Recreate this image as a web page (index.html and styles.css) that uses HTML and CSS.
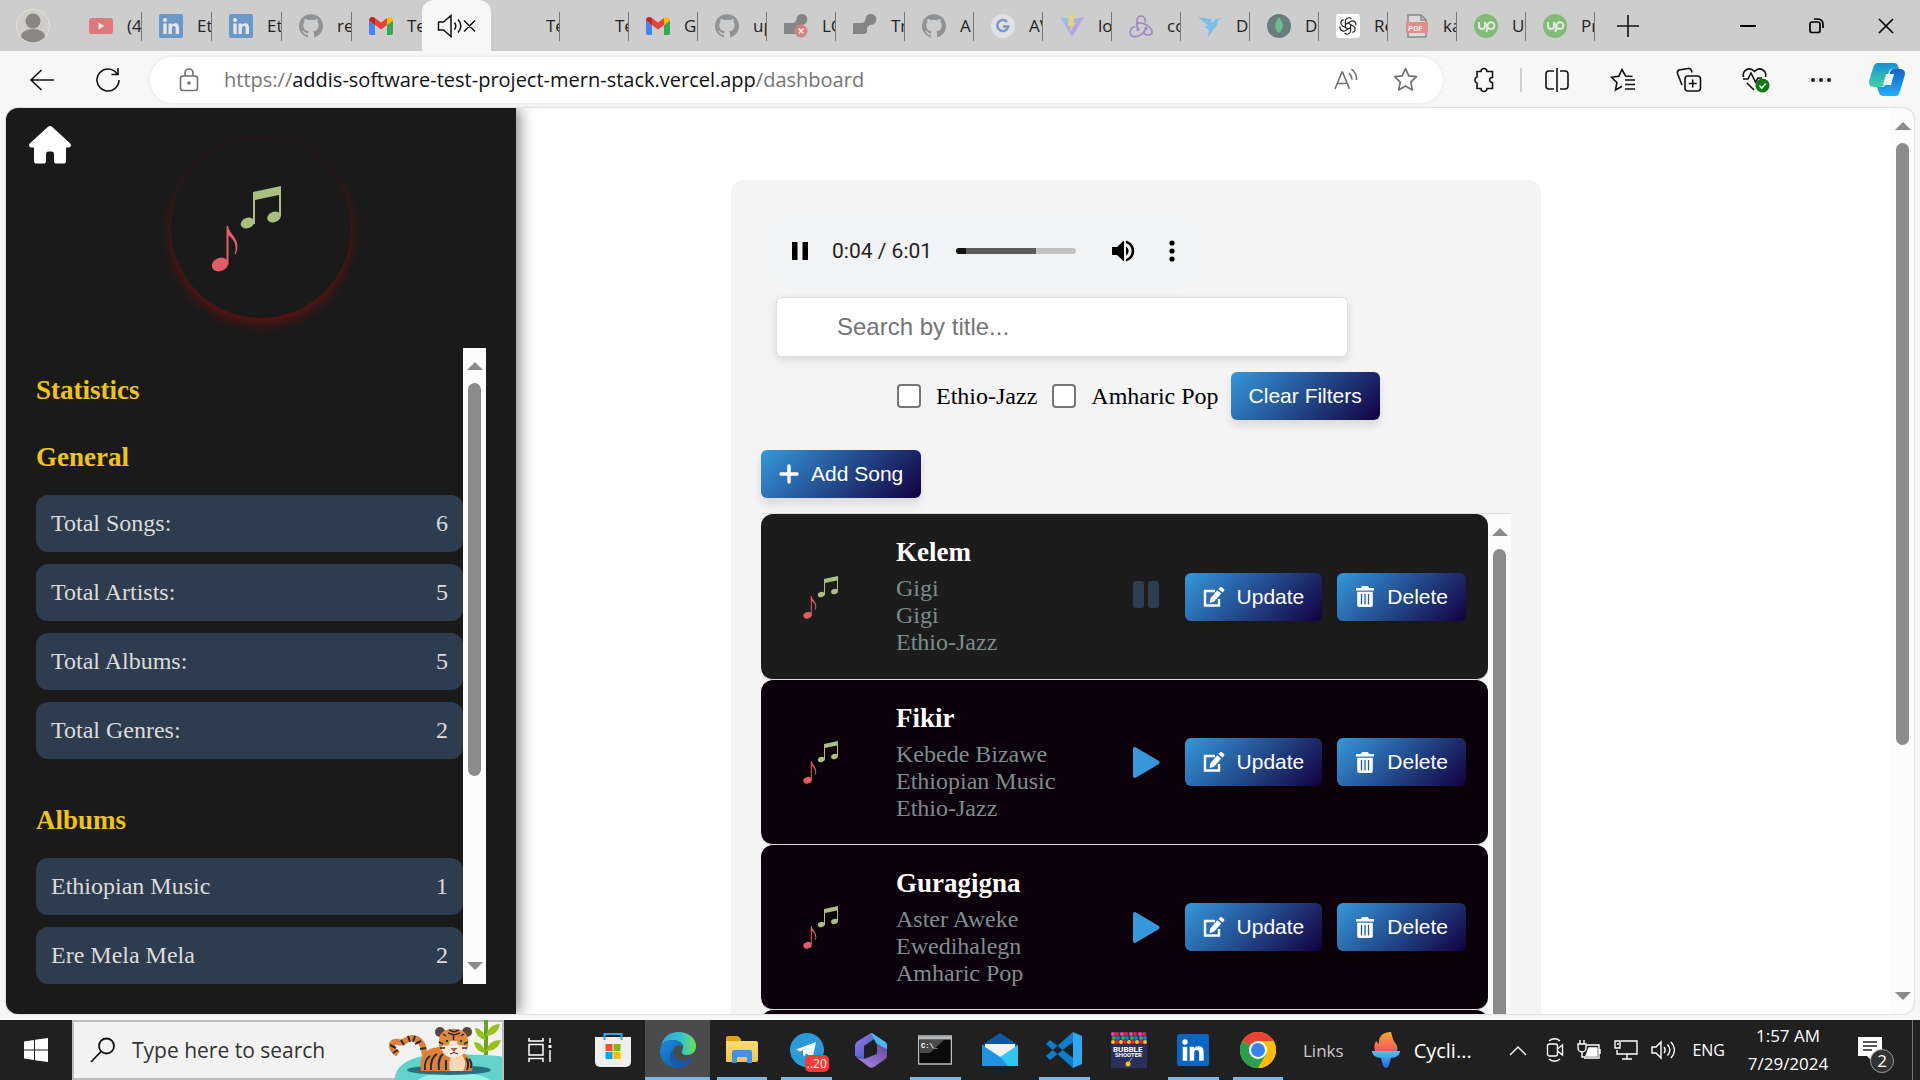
FILE: index.html
```html
<!DOCTYPE html>
<html lang="en">
<head>
<meta charset="utf-8">
<title>Dashboard</title>
<link rel="stylesheet" href="styles.css">
</head>
<body>
<svg class="defs" aria-hidden="true">
  <defs>
    <linearGradient id="g-edge" x1="0" y1="0" x2="1" y2="0"><stop offset="0" stop-color="#2aa5e0"/><stop offset=".6" stop-color="#35c6c9"/><stop offset="1" stop-color="#6be04f"/></linearGradient>
    <linearGradient id="g-edge2" x1="0" y1="0" x2="1" y2="1"><stop offset="0" stop-color="#1a8fe0"/><stop offset="1" stop-color="#0f4fa3"/></linearGradient>
    <linearGradient id="g-cop" x1="0" y1="0" x2="0" y2="1"><stop offset="0" stop-color="#1690d8"/><stop offset="1" stop-color="#3fd3a0"/></linearGradient>
    <linearGradient id="g-cop2" x1="0" y1="0" x2="0" y2="1"><stop offset="0" stop-color="#1560c8"/><stop offset="1" stop-color="#22b0f5"/></linearGradient>
    <linearGradient id="g-flame" x1="0" y1="0" x2="0" y2="1"><stop offset="0" stop-color="#f7a823"/><stop offset="1" stop-color="#f4556a"/></linearGradient>
    <linearGradient id="g-torch" x1="0" y1="0" x2="0" y2="1"><stop offset="0" stop-color="#55c3f7"/><stop offset="1" stop-color="#1c64e0"/></linearGradient>
    <linearGradient id="g-365" x1="0" y1="0" x2="1" y2="1"><stop offset="0" stop-color="#a07bea"/><stop offset="1" stop-color="#2b57c9"/></linearGradient>
    <linearGradient id="g-365b" x1="0" y1="1" x2="1" y2="0"><stop offset="0" stop-color="#b58bf0"/><stop offset="1" stop-color="#5c4796"/></linearGradient>
    <linearGradient id="g-folder" x1="0" y1="0" x2="0" y2="1"><stop offset="0" stop-color="#ffdc73"/><stop offset="1" stop-color="#f7c443"/></linearGradient>
    <linearGradient id="g-vite" x1="0" y1="0" x2="1" y2="1"><stop offset="0" stop-color="#67c5f5"/><stop offset="1" stop-color="#bd50f5"/></linearGradient>
    <symbol id="github" viewBox="0 0 16 16"><path fill="#555a5e" d="M8 0a8 8 0 0 0-2.5 15.6c.4.1.5-.2.5-.4v-1.400c-2.200.5-2.700-1-2.700-1-.4-.9-.9-1.200-.9-1.200-.7-.5.1-.5.1-.5.8.1 1.200.8 1.200.8.7 1.200 1.900.9 2.300.7.1-.5.3-.9.5-1.100-1.800-.2-3.600-.9-3.600-4 0-.9.3-1.600.8-2.100-.1-.2-.4-1 .1-2.100 0 0 .7-.2 2.200.8a7.500 7.500 0 0 1 4 0c1.500-1 2.200-.8 2.200-.8.4 1.100.2 1.900.1 2.100.5.6.8 1.300.8 2.200 0 3.100-1.900 3.700-3.700 3.900.3.300.6.8.6 1.500v2.200c0 .2.1.5.5.4A8 8 0 0 0 8 0z"/></symbol>
    <symbol id="linkedin" viewBox="0 0 24 24"><rect width="24" height="24" rx="2" fill="#0a66c2"/><g fill="#fff"><circle cx="6" cy="6" r="2"/><path d="M4.300 9.500h3.400V20H4.300zM9.500 9.500h3.300v1.500c.6-1 1.700-1.800 3.300-1.800 3.200 0 3.900 2 3.900 4.900V20h-3.400v-5.300c0-1.400-.2-2.700-1.700-2.700-1.600 0-2 1.300-2 2.700V20H9.500z"/></g></symbol>
    <symbol id="gmail" viewBox="0 0 24 18"><path fill="#4285f4" d="M0 3v13a2 2 0 0 0 2 2h4V8z"/><path fill="#34a853" d="M24 3v13a2 2 0 0 1-2 2h-4V8z"/><path fill="#ea4335" d="M6 1l6 4.500L18 1v7l-6 4.500L6 8z"/><path fill="#fbbc04" d="M18 1c3-2 6-1 6 2.500L18 8z"/><path fill="#c5221f" d="M6 1C3-1 0 0 0 3.500L6 8z"/></symbol>
    <symbol id="joint" viewBox="0 0 24 24"><path fill="#404040" d="M18 0a5.500 5.500 0 0 1 3 10c-2.500 1.200-7 .8-7 5v2a3 3 0 0 1-3 3H0v-4a4 4 0 0 1 0-7h7c5 0 5-2 6-6a5.500 5.500 0 0 1 5-3z"/></symbol>
    <symbol id="upwork" viewBox="0 0 24 24"><circle cx="12" cy="12" r="12" fill="#37ad22"/><path d="M5 8v4a3 3 0 0 0 6 0V8c1 4 3 7 6 7a3.400 3.400 0 1 0-3.400-3.400L12.500 18" fill="none" stroke="#fff" stroke-width="2"/></symbol>
    <symbol id="star" viewBox="0 0 24 24"><path fill="none" stroke-linejoin="round" d="M12 1.500l3.200 7 7.300.8-5.400 5.200 1.400 7.500L12 18.300 5.500 22l1.400-7.500L1.500 9.300l7.300-.8z"/></symbol>
    <symbol id="notes" viewBox="0 0 180 180">
      <g fill="#acbe80"><path d="M82 54l28-6v30h-2V57l-24 5v24h-2z"/><ellipse cx="76.500" cy="85" rx="7" ry="5.200" transform="rotate(-22 76.500 85)"/><ellipse cx="103" cy="79" rx="7" ry="5.200" transform="rotate(-22 103 79)"/></g>
      <g fill="#e15d66"><path d="M55.500 88h1.500c1.500 8 10 12 9.500 21-.1 3-1 5-2 7.500l-1-.6c3.500-9-1.500-15.500-6-18.500v29h-2z"/><ellipse cx="49" cy="126.500" rx="8.500" ry="6.600" transform="rotate(-22 49 126.500)"/></g>
    </symbol>
    <symbol id="edit" viewBox="0 0 22 20"><path fill="none" stroke="#fff" stroke-width="2.400" d="M12 4H2v14.500h14V12"/><path fill="#fff" d="M14.300 3.200l4 3.400L11 14.800 6.500 16l.9-4.800zM15.500 2l1.600-1.700c.6-.5 1.400-.4 2 .1l1.800 1.600c.6.600.6 1.300.1 1.900l-1.500 1.600z"/></symbol>
    <symbol id="trash" viewBox="0 0 18 21"><path fill="#fff" d="M0 2h5l1-2h6l1 2h5v2.500H0zM1.200 5.700h15.600V19a2 2 0 0 1-2 2H3.200a2 2 0 0 1-2-2z"/><path stroke="#1f5c9c" stroke-width="1.300" d="M5.500 8v10.500M9 8v10.500M12.500 8v10.500"/></symbol>
    <symbol id="play" viewBox="0 0 27 31"><path fill="#3498db" d="M0 2C0 .3 1.500-.4 3 .5l22.500 13.200c1.500.9 1.500 2.700 0 3.600L3 30.500c-1.500.9-3 .2-3-1.500z"/></symbol>
  </defs>
</svg>

<header class="tabbar">
  <button class="profile" aria-label="Profile"><svg width="34" height="34" viewBox="0 0 34 34"><circle cx="17" cy="17" r="16.500" fill="#cfcdc8" stroke="#e4e2dd"/><circle cx="17" cy="12" r="7.500" fill="#8a8682"/><path d="M5 28a12 8 0 0 1 24 0 16 16 0 0 1-24 0z" fill="#8a8682"/></svg></button>
  <nav class="tabs">
    <button class="tab first"><svg class="dim" viewBox="0 0 24 24"><rect y="4" width="24" height="16" rx="3" fill="#f0282d"/><path d="M9.500 8.500l6 3.500-6 3.500z" fill="#fff"/></svg><span>(4</span></button>
    <button class="tab first"><svg class="dim"><use href="#linkedin"/></svg><span>Et</span></button>
    <button class="tab first"><svg class="dim"><use href="#linkedin"/></svg><span>Et</span></button>
    <button class="tab first"><svg class="dim"><use href="#github"/></svg><span>re</span></button>
    <button class="tab first last"><svg><use href="#gmail"/></svg><span>Te</span></button>
    <button class="tab active" aria-label="Mute tab"><svg class="sound" viewBox="0 0 40 24"><g fill="none" stroke="#111" stroke-width="1.500"><path d="M1.500 8h5L14 1.500v21L6.500 16h-5zM17.500 8.500c1.500 2 1.500 5 0 7M21 5.500c3.500 4 3.500 9 0 13M27 6.500l11 11M38 6.500l-11 11"/></g></svg></button>
    <button class="tab"><i class="blank"></i><span>Te</span></button>
    <button class="tab"><i class="blank"></i><span>Te</span></button>
    <button class="tab"><svg><use href="#gmail"/></svg><span>G</span></button>
    <button class="tab"><svg class="dim"><use href="#github"/></svg><span>up</span></button>
    <button class="tab"><svg class="dim" viewBox="0 0 24 24"><use href="#joint"/><circle cx="17" cy="17" r="6.500" fill="#d9343c"/><path d="M14.500 14.500l5 5m0-5l-5 5" stroke="#fff" stroke-width="1.500"/></svg><span>LO</span></button>
    <button class="tab"><svg class="dim"><use href="#joint"/></svg><span>Tr</span></button>
    <button class="tab"><svg class="dim"><use href="#github"/></svg><span>A</span></button>
    <button class="tab"><svg class="dim" viewBox="0 0 24 24"><circle cx="12" cy="12" r="12" fill="#f4f6fa"/><path d="M16 8a5.500 5.500 0 1 0 1.200 4.500H12" fill="none" stroke="#2c68c8" stroke-width="2.600"/></svg><span>AV</span></button>
    <button class="tab"><svg class="dim" viewBox="0 0 24 24"><path d="M0 3l12 2 12-2-12 20z" fill="url(#g-vite)"/><path d="M15 0L8.500 1.500 8 12l3-.5-1 6 6-9-3 .5z" fill="#ffd43b"/></svg><span>lo</span></button>
    <button class="tab"><svg class="dim" viewBox="0 0 24 24"><g fill="none" stroke="#764abc" stroke-width="1.700"><path d="M9 15C6 9 8 2 12 2c3.500 0 5 3.500 4 6.500"/><path d="M9 9c7-1 14 5 14 9 0 4-6 4-8 1"/><path d="M17 15c-3 6-10 9-14 7-4-3-1-9 3-9.500"/></g><circle cx="9" cy="15.500" r="1.700" fill="#764abc"/><circle cx="17" cy="14.500" r="1.700" fill="#764abc"/><circle cx="9" cy="9" r="1.500" fill="#764abc"/></svg><span>co</span></button>
    <button class="tab"><svg class="dim" viewBox="0 0 24 24"><path fill="#29b2fe" d="M0 3l13 2 1 4 4-4 6-1-4 2-1 5-9 12 1-7-5-4 5 .5z"/></svg><span>D</span></button>
    <button class="tab"><svg class="dim" viewBox="0 0 24 24"><circle cx="12" cy="12" r="12" fill="#023430"/><path d="M12 3c5 6 5 12 0 16-5-4-5-10 0-16z" fill="#10aa50"/></svg><span>D</span></button>
    <button class="tab"><svg viewBox="0 0 24 24"><rect width="24" height="24" rx="3" fill="#fff"/><g fill="none" stroke="#222" stroke-width="1.200"><path id="petal" d="M9.400 13.500V7a3.400 3.400 0 0 1 6-2"/><use href="#petal" transform="rotate(60 12 12)"/><use href="#petal" transform="rotate(120 12 12)"/><use href="#petal" transform="rotate(180 12 12)"/><use href="#petal" transform="rotate(240 12 12)"/><use href="#petal" transform="rotate(300 12 12)"/></g></svg><span>Re</span></button>
    <button class="tab"><svg class="dim" viewBox="0 0 24 24"><path d="M3 1h13l5 5v17H3z" fill="#e8e8e8" stroke="#444" stroke-width="1.500"/><path d="M16 1v5h5" fill="none" stroke="#444" stroke-width="1.500"/><rect x="1" y="8" width="22" height="11" rx="1" fill="#f2504b"/><text x="3" y="17" class="pdf">PDF</text></svg><span>ka</span></button>
    <button class="tab"><svg class="dim"><use href="#upwork"/></svg><span>U</span></button>
    <button class="tab"><svg class="dim"><use href="#upwork"/></svg><span>Pr</span></button>
    <button class="newtab" aria-label="New tab"><svg width="22" height="22"><path d="M11 0v22M0 11h22" stroke="#111" stroke-width="1.600"/></svg></button>
  </nav>
  <div class="winbtns">
    <button aria-label="Minimize"><svg width="16" height="16"><path d="M0 8h16" stroke="#000" stroke-width="2"/></svg></button>
    <button aria-label="Restore"><svg width="16" height="16" fill="none" stroke="#000" stroke-width="1.700"><rect x="1" y="4" width="10" height="10.500" rx="2"/><path d="M5 1h4a5 5 0 0 1 5 5v4"/></svg></button>
    <button aria-label="Close"><svg width="16" height="16"><path d="M1 1l14 14M15 1L1 15" stroke="#000" stroke-width="1.700"/></svg></button>
  </div>
</header>

<div class="toolbar">
  <button class="tool" aria-label="Back"><svg width="26" height="22"><path d="M12.500 1L2 11l10.500 10M2 11h23" /></svg></button>
  <button class="tool" aria-label="Reload"><svg width="26" height="26"><path d="M24 13A11 11 0 1 1 20 4.500l2.500 2.500M23 1v6.500h-6.500"/></svg></button>
  <div class="address">
    <svg class="grey" width="20" height="24"><rect x="1.500" y="8" width="17" height="14.500" rx="2.500"/><path d="M6 8V5a4 4 0 0 1 8 0v3"/><circle cx="10" cy="15" r="1" fill="#666"/></svg>
    <div class="url" role="textbox" aria-label="Address"><span>https://</span>addis-software-test-project-mern-stack.vercel.app<span>/dashboard</span></div>
    <button aria-label="Read aloud"><svg class="grey" width="24" height="24"><path d="M1 21L8 4h.5l7 17M3.500 15.500H13M15 5c2 2 3 4 3 6.500M17.500 1C21 4 23 7.500 22.500 12"/></svg></button>
    <button aria-label="Favorite"><svg class="grey" width="25" height="25"><use href="#star"/></svg></button>
  </div>
  <button class="tool" aria-label="Extensions"><svg width="24" height="24"><path d="M8 3.500a3 3 0 0 1 6 0h5.500v6c-3.500-.5-4 5 0 5v6H14a3 3 0 0 1-6 0H4v-5.500a3.200 3.200 0 0 1 0-6V3.500z"/></svg></button>
  <i class="divider"></i>
  <button class="tool" aria-label="Split screen"><svg width="24" height="24"><path d="M9 3H4a3 3 0 0 0-3 3v12a3 3 0 0 0 3 3h5M15 3h5a3 3 0 0 1 3 3v12a3 3 0 0 1-3 3h-5M12 0v24"/></svg></button>
  <button class="tool" aria-label="Favorites"><svg width="26" height="24"><path d="M22.500 8.500l-7-.5L12 1.500 8.800 8.200 1.500 9.300l5.400 5.200L5.500 22l6.500-3.700M15 12h10M15 16.500h10M15 21h10"/></svg></button>
  <button class="tool" aria-label="Collections"><svg width="26" height="26"><rect x="9" y="9" width="15.500" height="15" rx="3"/><path d="M16.700 12.500v8M12.700 16.500h8M6 18L1.500 6.500a3 3 0 0 1 1.500-3.500L12 1.500a3 3 0 0 1 3.500 2l.5 2"/></svg></button>
  <button class="tool" aria-label="Browser essentials"><svg width="26" height="26"><path d="M1.500 10C0 3.500 7-1 12.500 4.500 18-1 25 3.500 23.500 10M1 12h5l3-6 4.500 9 2.500-4h4M5 16l7 7"/><circle cx="20.500" cy="18.500" r="7" fill="#107c10" stroke="none"/><path d="M17.500 18.500l2.300 2.500 4-4.500" stroke="#fff"/></svg></button>
  <button class="tool" aria-label="More"><svg width="22" height="6"><g fill="#111" stroke="none"><circle cx="3" cy="3" r="2"/><circle cx="11" cy="3" r="2"/><circle cx="19" cy="3" r="2"/></g></svg></button>
  <button class="tool" aria-label="Copilot"><svg width="36" height="33"><g stroke="none"><path fill="url(#g-cop)" d="M9 0h16c3 0 4 2 5 6h-6c-3 0-4 2-5 5l-3 9c-1 3-3 4-6 4H5c-5 0-6-4-4-9L4 5c1-3 2-5 5-5z"/><path fill="url(#g-cop2)" d="M27 33H14c-3 0-4-3-6-9h5c2 0 3-1 4-4l4-11c1-2 2-3 4-3h6c5 0 6 4 4 9l-4 13c-1 3-2 5-4 5z"/><path fill="#f7f7f7" d="M17 11h8l-3 11h-8z"/></g></svg></button>
</div>

<div class="frame">
  <aside class="sidebar">
    <a class="home" href="#" aria-label="Home"><svg width="42" height="38" viewBox="0 0 42 38"><path fill="#fff" d="M19 .8c1.200-1 2.800-1 4 0l18 16.400c2 2 .5 4.300-1.500 4.300h-2.500V35a2.600 2.600 0 0 1-2.600 2.600h-6.800A2.600 2.600 0 0 1 25 35v-7a2.500 2.500 0 0 0-2.500-2.500h-3A2.500 2.500 0 0 0 17 28v7a2.600 2.600 0 0 1-2.600 2.600H7.600A2.600 2.600 0 0 1 5 35V21.500H2.500C.5 21.500-1 19.200 1 17.200z"/></svg></a>
    <div class="disc"><svg width="180" height="180"><use href="#notes"/></svg></div>
    <div class="stats">
      <div class="statlist">
        <h2>Statistics</h2>
        <h3>General</h3>
        <ul>
          <li><span>Total Songs:</span><span>6</span></li>
          <li><span>Total Artists:</span><span>5</span></li>
          <li><span>Total Albums:</span><span>5</span></li>
          <li><span>Total Genres:</span><span>2</span></li>
        </ul>
        <h3>Albums</h3>
        <ul>
          <li><span>Ethiopian Music</span><span>1</span></li>
          <li><span>Ere Mela Mela</span><span>2</span></li>
        </ul>
      </div>
      <div class="scroll"><i class="up"></i><i class="thumb"></i><i class="rest"></i><i class="down"></i></div>
    </div>
  </aside>

  <main class="content">
    <section class="panel">
      <div class="player">
        <button aria-label="Pause"><svg width="16" height="18"><path d="M0 0h5.500v18H0zM10.500 0H16v18h-5.500z"/></svg></button>
        <span class="time">0:04 / 6:01</span>
        <input class="seek" type="range" min="0" max="361" value="4" aria-label="Seek">
        <button class="vol" aria-label="Volume"><svg width="24" height="22"><path d="M0 7h5l7-6.500v21L5 15H0z"/><path d="M14 6.500c3.500 2 3.500 7 0 9zM14 .5c11 3 11 18 0 21v-2.600c7.500-2.500 7.500-13 0-15.800z"/></svg></button>
        <button class="more" aria-label="More options"><svg width="6" height="22"><circle cx="3" cy="3" r="2.600"/><circle cx="3" cy="11" r="2.600"/><circle cx="3" cy="19" r="2.600"/></svg></button>
      </div>
      <input class="search" type="text" placeholder="Search by title..." aria-label="Search by title">
      <div class="filters">
        <label><input type="checkbox">Ethio-Jazz</label>
        <label><input type="checkbox">Amharic Pop</label>
        <button class="btn">Clear Filters</button>
      </div>
      <button class="btn add"><svg width="20" height="20"><path d="M10 2v16M2 10h16" stroke="#fff" stroke-width="3.400" stroke-linecap="round"/></svg>Add Song</button>
      <div class="songs">
        <ul class="songlist">
          <li class="song playing">
            <svg width="90" height="90"><use href="#notes"/></svg>
            <div class="info"><h4>Kelem</h4><p>Gigi</p><p>Gigi</p><p>Ethio-Jazz</p></div>
            <button class="toggle" aria-label="Pause"><svg width="27" height="31"><rect width="11" height="27" rx="3" fill="#2c3e50"/><rect x="15" width="11" height="27" rx="3" fill="#2c3e50"/></svg></button>
            <button class="btn"><svg width="22" height="20"><use href="#edit"/></svg>Update</button>
            <button class="btn"><svg width="20" height="21"><use href="#trash"/></svg>Delete</button>
          </li>
          <li class="song">
            <svg width="90" height="90"><use href="#notes"/></svg>
            <div class="info"><h4>Fikir</h4><p>Kebede Bizawe</p><p>Ethiopian Music</p><p>Ethio-Jazz</p></div>
            <button class="toggle" aria-label="Play"><svg width="27" height="31"><use href="#play"/></svg></button>
            <button class="btn"><svg width="22" height="20"><use href="#edit"/></svg>Update</button>
            <button class="btn"><svg width="20" height="21"><use href="#trash"/></svg>Delete</button>
          </li>
          <li class="song">
            <svg width="90" height="90"><use href="#notes"/></svg>
            <div class="info"><h4>Guragigna</h4><p>Aster Aweke</p><p>Ewedihalegn</p><p>Amharic Pop</p></div>
            <button class="toggle" aria-label="Play"><svg width="27" height="31"><use href="#play"/></svg></button>
            <button class="btn"><svg width="22" height="20"><use href="#edit"/></svg>Update</button>
            <button class="btn"><svg width="20" height="21"><use href="#trash"/></svg>Delete</button>
          </li>
          <li class="song"></li>
        </ul>
        <div class="scroll"><i class="up"></i><i class="thumb"></i></div>
      </div>
    </section>
  </main>
  <div class="scroll page"><i class="up"></i><i class="thumb"></i><i class="rest"></i><i class="down"></i></div>
</div>

<footer class="taskbar">
  <button class="start" aria-label="Start"><svg width="24" height="24"><path fill="#fff" d="M0 3.500L10 2v9.500H0zM11 1.800L24 0v11.500H11zM0 12.500h10V22L0 20.500zM11 12.500h13V24l-13-1.800z"/></svg></button>
  <div class="tasksearch">
    <svg width="26" height="26"><circle cx="16.500" cy="9" r="7.500" fill="none" stroke="#111" stroke-width="1.800"/><path d="M11 14.500L1 25" stroke="#111" stroke-width="1.800"/></svg>
    <input type="text" placeholder="Type here to search" aria-label="Search">
    <svg class="tiger" width="114" height="60" viewBox="0 0 114 60">
      <path d="M7 60C6 42 30 33 62 34s44 1 54 3v23z" fill="#62d3cb"/><path d="M30 60c10-10 60-10 72 0z" fill="#9af0e2"/>
      <ellipse cx="61" cy="50" rx="42" ry="5" fill="#256f80"/>
      <path d="M10 34c-9-6-7-14 0-12 6 3 8-4 14-4 9 0 12 8 13 18" fill="none" stroke="#de8136" stroke-width="6"/>
      <path d="M2 25l6 3M5 33l5-3M13 20l3 5M20 16l2 6M27 16l-2 6M33 21l-6 3M38 28l-6 1" stroke="#2a2840" stroke-width="2"/>
      <path d="M33 51c-3-16 6-24 20-24l22 6c9 4 10 12 9 18z" fill="#de8136"/>
      <path d="M62 51c-2-8 0-14 4-16l8 0c4 5 4 11 1 16z" fill="#f6d7b8"/>
      <path d="M37 50c-1-7 2-12 5-14M43 50c-1-8 2-14 6-16M51 50c-1-8 1-14 4-16M58 50v-10M79 50c2-5 1-9-1-12M83 48c1-4 0-7-2-9" fill="none" stroke="#2a2840" stroke-width="2"/>
      <circle cx="52" cy="12" r="5" fill="#59463e"/><circle cx="79" cy="12" r="5" fill="#59463e"/>
      <path d="M51 20c0-15 29-15 29 0 2 9-5 18-14 18s-17-9-15-18z" fill="#e08b3c"/>
      <path d="M53 27c4-4 8 2 9-6h7c1 8 6 2 10 6-1 7-7 11-13 11s-12-4-13-11z" fill="#f8ead9"/>
      <path d="M61 10l5 2 5-2M60 13l6 2 6-2M65.500 15v5M51 22l4 2M80 22l-4 2M52 28l5 0M79 28l-5 0M55 14l3 2M76 14l-3 2" fill="none" stroke="#2a2840" stroke-width="1.500"/>
      <circle cx="59" cy="21" r="2.300" fill="#87ad36"/><circle cx="73" cy="21" r="2.300" fill="#87ad36"/><circle cx="59" cy="21" r="1" fill="#111"/><circle cx="73" cy="21" r="1" fill="#111"/><path d="M62.500 28h7L66 32z" fill="#b15b5b"/><path d="M62 34q4-3 8 0" fill="none" stroke="#2a2840"/>
      <path d="M98 0v35" stroke="#6ba51b" stroke-width="4"/><path d="M98 20c-2-8-6-12-11-12 0 6 5 11 11 12zM98 33c-3-8-7-11-12-11 1 7 6 11 12 11zM98 16c2-8 7-12 14-12-1 7-7 12-14 12zM98 31c2-8 8-11 15-11-2 8-8 11-15 11z" fill="#96c11d"/>
    </svg>
  </div>
  <button class="taskview" aria-label="Task View"><svg width="24" height="24" fill="none" stroke="#fff" stroke-width="1.500"><path d="M1 0v3h14V0M1 24v-3.500h14V24M22 0v5M22 12v12"/><rect x="1" y="6.500" width="14" height="10.500"/><path d="M20.500 8.500h3" stroke-width="3"/></svg></button>
  <div class="apps">
    <button class="app" aria-label="Store"><svg width="36" height="36"><path d="M0 5h36v25a5 5 0 0 1-5 5H5a5 5 0 0 1-5-5z" fill="#efefef"/><path d="M9.500 8V2h17v6" fill="none" stroke="#27a8f0" stroke-width="2"/><path fill="#f25022" d="M10.500 12h7v7h-7z"/><path fill="#7fba00" d="M18.500 12h7v7h-7z"/><path fill="#00a4ef" d="M10.500 20h7v7h-7z"/><path fill="#ffb900" d="M18.500 20h7v7h-7z"/></svg></button>
    <button class="app open current" aria-label="Edge"><svg width="36" height="36"><path d="M1 14C3 5 10 0 18 0c10 0 18 6 18 14 0 6-4 9-9 9-4 0-6-2-5-4 4-7-3-11-9-11C7 8 3 10 1 14z" fill="url(#g-edge)"/><path d="M0 19C1 11 7 8 13 8c5 0 9 3 9.500 7-6-4-11 1-9 8 2 6 9 9 15 7-3 4-7 6-11 6C8 36 0 29 0 19z" fill="url(#g-edge2)"/><path d="M13.500 16c-3 8 4 15 13 12 4-1 6-3 6.500-2-4 7-10 10-15 10-9-2-10-13-4.500-20z" fill="#145aa8"/></svg></button>
    <button class="app open" aria-label="File Explorer"><svg width="34" height="30"><path d="M1 3a2 2 0 0 1 2-2h10l3 3v6H1z" fill="#e2a00e"/><path d="M1 6h30a2 2 0 0 1 2 2v17a2 2 0 0 1-2 2H1z" fill="url(#g-folder)"/><path d="M7 28V17a2 2 0 0 1 2-2h16a2 2 0 0 1 2 2v11h-5v-6h-10v6z" fill="#3b96dd"/></svg></button>
    <button class="app open" aria-label="Telegram"><svg width="36" height="36"><circle cx="18" cy="18" r="17" fill="#2a9bd8"/><path fill="#fff" d="M7 17.500L27 10l-3.500 16-6-4.500-3 3-.7-6L24 13l-13 6.500z"/></svg><span class="badge">..20</span></button>
    <button class="app" aria-label="Microsoft 365"><svg width="32" height="36"><path d="M16 1L3 9c-2 1-3 3-3 5v10l9 3V14l13-9z" fill="url(#g-365)"/><path d="M16 1l5 10 11 14V13c0-2-1-3-3-4L17 1z" fill="#48b7ef"/><path d="M1 25l13 10c2 1 3 1 5 0l10-7c2-1 3-3 3-5v-6l-10-5v10L9 27z" fill="url(#g-365b)"/></svg></button>
    <button class="app open" aria-label="Command Prompt"><svg width="34" height="30"><rect x=".5" y="1" width="33" height="28" fill="#0b0b0b" stroke="#b9bcbf" stroke-width="1.500"/><path d="M1 3h32" stroke="#b9bcbf" stroke-width="3"/><path d="M2 5h24L12 18H2z" fill="#4a4a4a"/><text class="cmd" x="3" y="13">C:\_</text></svg></button>
    <button class="app" aria-label="Mail"><svg width="36" height="36"><path d="M0 13L18 1l18 12v9H0z" fill="#0b5aa8"/><path d="M3 12h30v8L18 28 3 18z" fill="#f2f2f2"/><path d="M0 13l18 12L36 13v21H0z" fill="#32c5f4"/><path d="M0 13l18 12 8 9H0z" fill="#1e93e0"/></svg></button>
    <button class="app open" aria-label="Visual Studio Code"><svg width="36" height="36"><path d="M27 0l9 4v28l-9 4z" fill="#2fa8f2"/><path d="M27 0v10L4 28l-4-4zM27 36V26L4 8 0 12z" fill="#0b7fcb"/></svg></button>
    <button class="app" aria-label="Bubble Shooter"><svg width="36" height="36"><path fill="#2c2f5c" d="M0 0h36v36H0z"/><g fill="none" stroke-width="4" stroke-linecap="round"><path d="M2 2h33" stroke="#f03cae" stroke-dasharray="0 9"/><path d="M6 2h30" stroke="#e8262c" stroke-dasharray="0 9"/><path d="M3 6h33" stroke="#2bb536" stroke-dasharray="0 9"/><path d="M7 6h29" stroke="#2d6df0" stroke-dasharray="0 9"/><path d="M2 10h33" stroke="#f5c51d" stroke-dasharray="0 8"/><path d="M6 10h30" stroke="#e8262c" stroke-dasharray="0 8"/></g><text class="bubble" x="2" y="20">BUBBLE</text><text class="bubble small" x="4" y="25">SHOOTER</text><circle cx="17" cy="32" r="2.500" fill="#f5c51d"/><path d="M18 30l3-4" stroke="#aaa"/></svg></button>
    <button class="app open" aria-label="LinkedIn"><svg width="32" height="32"><use href="#linkedin"/></svg></button>
    <button class="app open" aria-label="Chrome"><svg width="36" height="36"><circle cx="18" cy="18" r="18" fill="#fbbc04"/><path d="M18 18L2.400 9A18 18 0 0 1 33.600 9z" fill="#ea4335"/><path d="M2.400 9A18 18 0 0 0 18 36l8-13.500-8-4.500z" fill="#2da04e"/><path d="M18 9h15.600A18 18 0 0 1 18 36l8-13.500z" fill="#fbbc04"/><circle cx="18" cy="18" r="9" fill="#fff"/><circle cx="18" cy="18" r="7" fill="#3b82f0"/></svg></button>
  </div>
  <span class="links">Links</span>
  <button class="news"><svg width="28" height="36"><path d="M19 0c-9 0-13 5-12 12L4 9c-2 4-2 7-1 10h22c2-6-3-8-4-12z" fill="url(#g-flame)"/><path d="M0 19h28c0 4-4 7-9 7l-2 7c-1 4-5 4-6 0l-2-7c-5 0-9-3-9-7z" fill="url(#g-torch)"/></svg>Cycli...</button>
  <div class="tray">
    <svg class="chevron" width="18" height="11"><path d="M1 10l8-8 8 8"/></svg>
    <svg width="18" height="24"><path d="M3 3c3-3 8-3 11 0M3 21c3 3 8 3 11 0M11.500 11l5-4v10l-5-4"/><rect x="1.500" y="6" width="10" height="12" rx="2"/></svg>
    <svg width="24" height="20"><path d="M3 0v4M7 0v4M1 4h8v4a4 4 0 0 1-8 0zM5 12v5h3"/><path d="M9.500 5H22v13H7M23 9v5"/><path d="M12 8h8v8H9z" fill="#fff"/></svg>
    <svg width="24" height="20"><path d="M7 1h16v13H3V10M13 14v5M8 19h10M1 1h5v7H1zM3 4h2"/></svg>
    <svg width="24" height="20"><path d="M1 7h4l5-5v16l-5-5H1zM13 7c1.500 2 1.500 4 0 6M16.500 4.500c3 3.500 3 7.500 0 11M20 2c4.500 5 4.500 11 0 16"/></svg>
  </div>
  <span class="lang">ENG</span>
  <div class="clock"><span>1:57 AM</span><span>7/29/2024</span></div>
  <button class="notify" aria-label="Notifications"><svg width="24" height="26"><path d="M0 0h24v19H15v6l-6-6H0z" fill="#fff"/><path d="M5 5h14M5 9h14M5 13h9" stroke="#222" stroke-width="1.500"/></svg><span>2</span></button>
  <i class="showdesk"></i>
</footer>
</body>
</html>
```

FILE: styles.css
```css
* { box-sizing: border-box; }
body {
  margin: 0;
  height: 100vh;
  display: flex;
  flex-direction: column;
  overflow: hidden;
  background: #f7f7f7;
  font-family: "Open Sans", "Noto Sans", sans-serif;
}
button { border: 0; padding: 0; background: none; font: inherit; color: inherit; }
ul { list-style: none; margin: 0; padding: 0; }
h2, h3, h4, p { margin: 0; }
svg { flex: none; display: block; }
.defs { position: absolute; width: 0; height: 0; }

/* Browser tabs */
.tabbar { display: flex; height: 51px; background: #cdcdcd; flex: none; }
.profile { width: 72px; padding-left: 16px; }
.tabs { display: flex; flex: 1; min-width: 0; }
.tab {
  position: relative;
  width: 69px;
  display: flex;
  align-items: center;
  gap: 14px;
  padding-left: 17px;
  overflow: hidden;
  font-size: 17px;
  color: #222;
  white-space: nowrap;
}
.tab.first { width: 70px; }
.tab svg, .tab .blank { width: 24px; height: 24px; flex: none; }
.tab .dim { opacity: .5; }
.tab::after {
  content: "";
  position: absolute;
  right: 0;
  top: 12px;
  width: 1px;
  height: 29px;
  background: #777;
}
.tab.last::after, .tab.active::after { display: none; }
.tab.active { background: #f7f7f7; border-radius: 12px 12px 0 0; padding-left: 15px; }
.tab .sound { width: 40px; }
.pdf { font: bold 8px Roboto, sans-serif; fill: #fff; }
.newtab { margin-left: 22px; }
.winbtns { display: flex; }
.winbtns button { width: 69px; display: grid; place-items: center; }

/* Address row */
.toolbar { display: flex; align-items: center; height: 57px; padding-left: 9px; flex: none; }
.tool { width: 66px; display: grid; place-items: center; }
.toolbar svg { fill: none; stroke: #111; stroke-width: 1.6; overflow: visible; }
.toolbar .grey { stroke: #707070; }
.address {
  flex: 1;
  height: 46px;
  margin: 0 9px;
  padding: 0 25px 0 29px;
  display: flex;
  align-items: center;
  background: #fff;
  border-radius: 23px;
  box-shadow: 0 0 4px rgba(0, 0, 0, .08);
}
.address button { margin-left: 35px; }
.url { flex: 1; margin-left: 25px; font-size: 20px; color: #111; white-space: nowrap; }
.url span { color: #757575; }
.divider { width: 2px; height: 24px; margin: 0 2px; background: #cfcfcf; }

/* Web page */
.frame {
  flex: 1;
  min-height: 0;
  margin: 0 6px 6px;
  display: flex;
  background: #fff;
  border-radius: 12px;
  box-shadow: 0 0 2px rgba(0, 0, 0, .3);
  overflow: hidden;
  font-family: "Liberation Serif", serif;
}
.sidebar {
  position: relative;
  width: 510px;
  flex: none;
  display: flex;
  flex-direction: column;
  align-items: center;
  padding: 30px;
  background: #1a1a1a;
  box-shadow: 3px 0 15px rgba(0, 0, 0, .5);
}
.home { position: absolute; left: 23px; top: 18px; }
.disc { border-radius: 50%; box-shadow: 0 6px 12px rgba(255, 0, 0, .3); flex: none; }
.stats { display: flex; align-self: stretch; flex: 1; min-height: 0; margin-top: 30px; }
.statlist { flex: 1; overflow: hidden; color: #dcdcdc; font-size: 24px; line-height: 27px; }
.statlist h2, .statlist h3 { font-size: 27px; line-height: 30px; color: #f1c40f; }
.statlist h2 { margin-top: 27px; }
.statlist h3 { margin: 37px 0 23px; }
.statlist ul + h3 { margin-top: 46px; }
.statlist ul { display: flex; flex-direction: column; gap: 12px; }
.statlist li {
  display: flex;
  justify-content: space-between;
  padding: 15px;
  border-radius: 12px;
  background: #2d3d4f;
}

/* Scroll bars */
.scroll {
  width: 23px;
  flex: none;
  display: flex;
  flex-direction: column;
  align-items: center;
  padding: 14px 0;
  background: #fcfcfc;
}
.up, .down { border: 8px solid transparent; border-top-width: 0; border-bottom: 8px solid #8b8b8b; }
.down { border-bottom: 0; border-top: 8px solid #8b8b8b; }
.thumb { width: 13px; margin-top: 13px; flex: 393; border-radius: 7px; background: #8b8b8b; }
.rest { flex: 186; }
.page .thumb { flex: 602; }
.page .rest { flex: 247; }

/* Player panel */
.content {
  flex: 1;
  min-width: 0;
  display: grid;
  grid-template-columns: 215fr 810fr 350fr;
  padding-top: 72px;
}
.panel {
  grid-column: 2;
  height: 1000px;
  padding: 30px;
  display: flex;
  flex-direction: column;
  align-items: flex-start;
  background: #f4f4f4;
  border-radius: 12px;
}
.panel > * { flex: none; }
.player {
  width: 450px;
  height: 81px;
  padding: 0 36px 0 31px;
  display: flex;
  align-items: center;
  background: #f1f3f4;
  border-radius: 40px;
  font: 21px Roboto, sans-serif;
  color: #222;
}
.time { width: 124px; margin-left: 24px; white-space: nowrap; }
.seek {
  appearance: none;
  flex: 1;
  min-width: 0;
  height: 6px;
  margin: 0;
  border-radius: 3px;
  background: linear-gradient(to right, #111 8%, #5a5a5a 8% 67%, #c2c2c2 67%);
}
.seek::-webkit-slider-thumb { appearance: none; width: 8px; height: 6px; border-radius: 3px; background: #111; }
.vol { margin-left: 36px; }
.more { margin-left: 33px; }
.search {
  width: 572px;
  height: 60px;
  margin: 6px 0 0 15px;
  padding: 0 60px;
  border: 1px solid #ddd;
  border-radius: 6px;
  box-shadow: 0 3px 8px rgba(0, 0, 0, .12);
  font: 24px "Liberation Sans", sans-serif;
}
.search::placeholder { color: #757575; opacity: 1; }
.filters {
  display: flex;
  align-items: center;
  gap: 15px;
  margin: 15px 0 30px 136px;
  font-size: 24px;
}
.filters label { display: flex; align-items: center; gap: 15px; white-space: nowrap; }
.filters input {
  appearance: none;
  width: 24px;
  height: 24px;
  margin: 0;
  border: 2px solid #767676;
  border-radius: 4px;
  background: #fff;
}
.filters .btn { margin-left: -3px; }
.btn {
  display: flex;
  align-items: center;
  gap: 12px;
  height: 48px;
  padding: 0 18px;
  border-radius: 6px;
  background: linear-gradient(135deg, #3498db, #120040);
  box-shadow: 0 6px 9px rgba(0, 0, 0, .1);
  color: #fff;
  font: 21px "Liberation Sans", sans-serif;
  white-space: nowrap;
}
.songs { display: flex; align-self: stretch; margin-top: 15px; border-top: 1px solid #ddd; }
.songlist { flex: 1; }
.song {
  height: 165px;
  display: flex;
  align-items: center;
  padding: 0 22px;
  border-bottom: 1px solid #ddd;
  border-radius: 12px;
  background: #0b0009;
}
.song.playing { background: #1c1c1c; height: 166px; }
.info { flex: 1; margin-left: 23px; font-size: 24px; line-height: 27px; color: #7f8c8d; }
.info h4 { font-size: 27px; line-height: 30px; margin-bottom: 8px; color: #fff; }
.toggle { margin-right: 25px; }
.song .btn + .btn { margin-left: 15px; }

/* Taskbar */
.taskbar { display: flex; align-items: center; height: 60px; flex: none; background: #202020; color: #fff; }
.taskbar > * { flex: none; }
.start { width: 72px; display: grid; place-items: center; }
.tasksearch {
  width: 432px;
  height: 60px;
  display: flex;
  align-items: center;
  padding-left: 16px;
  background: #f2f2f2;
  border: 2px solid #bdbdbd;
}
.tasksearch input {
  flex: 1;
  min-width: 0;
  margin-left: 16px;
  padding: 0;
  border: 0;
  background: none;
  font: 21px "Open Sans", sans-serif;
}
.tasksearch input::placeholder { color: #333; opacity: 1; }
.taskview { width: 77px; padding-right: 6px; display: grid; place-items: center; }
.taskbar .apps { flex: 0 1 709px; display: flex; height: 60px; }
.app { position: relative; flex: 1; display: grid; place-items: center; }
.app.open::after { content: ""; position: absolute; left: 7px; right: 7px; bottom: 0; height: 3px; background: #76b9ed; }
.app.current { background: #4b4b4b; }
.app.current::after { left: 0; right: 0; }
.badge {
  position: absolute;
  right: 10px;
  top: 35px;
  padding: 0 2px;
  border-radius: 5px;
  background: #f23c34;
  font-size: 12px;
  line-height: 17px;
}
.cmd { font: bold 7px "Liberation Mono", monospace; fill: #fff; }
.bubble { font: bold 8px Roboto, sans-serif; fill: #fff; }
.bubble.small { font-size: 6px; }
.links { margin-left: 13px; font-size: 17px; color: #ccc; }
.news { display: flex; align-items: center; gap: 14px; margin-left: 28px; font-size: 20px; }
.tray { display: flex; align-items: center; gap: 13px; margin-left: auto; }
.tray svg { fill: none; stroke: #fff; stroke-width: 1.4; }
.tray .chevron { margin-right: 6px; }
.lang { margin-left: 17px; font-size: 16px; }
.clock { width: 126px; text-align: center; font-size: 17px; line-height: 28px; }
.clock span { display: block; }
.notify { position: relative; margin-left: 7px; width: 54px; }
.notify span {
  position: absolute;
  left: 12px;
  top: 12px;
  width: 24px;
  height: 24px;
  border: 1px solid #999;
  border-radius: 50%;
  background: #333;
  font-size: 17px;
  line-height: 22px;
}
.showdesk { width: 8px; height: 60px; border-left: 1px solid #777; }
```
